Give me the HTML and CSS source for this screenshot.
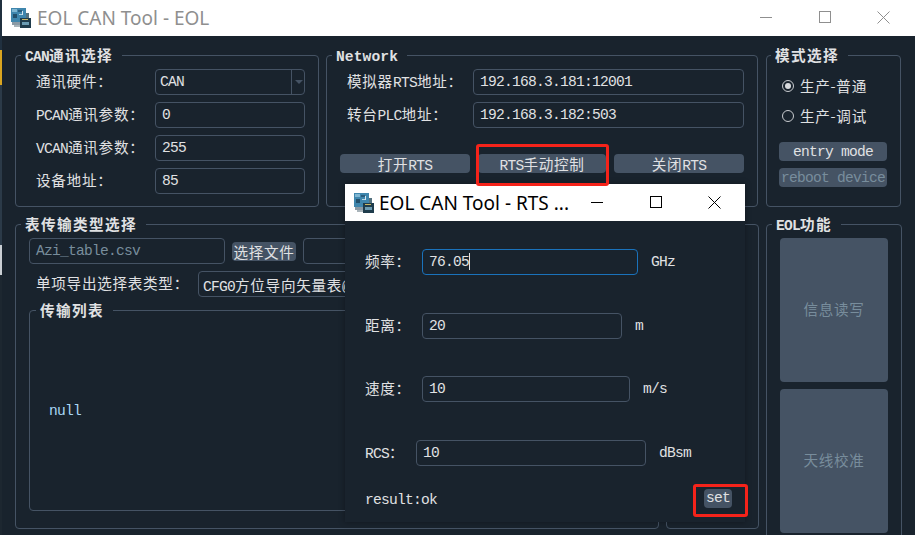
FILE: index.html
```html
<!DOCTYPE html>
<html lang="zh">
<head>
<meta charset="utf-8">
<title>EOL CAN Tool - EOL</title>
<link rel="stylesheet" href="styles.css">
</head>
<body>
<svg class="defs" width="0" height="0">
  <symbol id="app-icon" viewBox="0 0 20 20">
    <rect x="0" y="0" width="15" height="14" fill="#3f86ad"/>
    <rect x="1" y="1" width="5" height="3" fill="#7fb6d2"/>
    <rect x="7" y="2" width="4" height="2" fill="#2a5d7d"/>
    <rect x="2" y="6" width="4" height="4" fill="#23506c"/>
    <rect x="8" y="6" width="3" height="1" fill="#b5d5e5"/>
    <rect x="11" y="3" width="1" height="4" fill="#d5e5ee"/>
    <rect x="1" y="14" width="8" height="3" fill="#8a9aa5"/>
    <rect x="3" y="17" width="9" height="2" fill="#a9b4ba"/>
    <rect x="9" y="10" width="11" height="10" fill="#1f3c4c"/>
    <rect x="11" y="11" width="6" height="1" fill="#c9b765"/>
    <rect x="11" y="14" width="7" height="3" fill="#6b9cb3"/>
    <rect x="15" y="5" width="3" height="5" fill="#55727f"/>
  </symbol>
</svg>

<div class="window">
  <header class="titlebar">
    <svg class="app-icon"><use href="#app-icon"/></svg>
    <span class="title-text inactive">EOL CAN Tool - EOL</span>
    <div class="controls">
      <svg class="ctl" viewBox="0 0 14 14"><path d="M1 6.5H13" stroke="#8f8f8f" fill="none"/></svg>
      <svg class="ctl" viewBox="0 0 14 14"><rect x="1.5" y="0.5" width="11" height="11" stroke="#8f8f8f" fill="none"/></svg>
      <svg class="ctl" viewBox="0 0 14 14"><path d="M0.5 0.5L12.5 12.5M12.5 0.5L0.5 12.5" stroke="#8f8f8f" fill="none"/></svg>
    </div>
  </header>

  <main class="content">
    <div class="top-row">
      <fieldset class="group can-group">
        <legend>CAN<span class="zh">通讯选择</span></legend>
        <div class="form-rows">
          <div class="row">
            <label class="lbl"><span class="zh">通讯硬件：</span></label>
            <div class="field combo"><span>CAN</span><i class="arrow"></i></div>
          </div>
          <div class="row">
            <label class="lbl">PCAN<span class="zh">通讯参数：</span></label>
            <div class="field">0</div>
          </div>
          <div class="row">
            <label class="lbl">VCAN<span class="zh">通讯参数：</span></label>
            <div class="field">255</div>
          </div>
          <div class="row">
            <label class="lbl"><span class="zh">设备地址：</span></label>
            <div class="field">85</div>
          </div>
        </div>
      </fieldset>

      <fieldset class="group net-group">
        <legend class="latin-title">Network</legend>
        <div class="form-rows">
          <div class="row">
            <label class="lbl"><span class="zh">模拟器</span>RTS<span class="zh">地址：</span></label>
            <div class="field">192.168.3.181:12001</div>
          </div>
          <div class="row">
            <label class="lbl"><span class="zh">转台</span>PLC<span class="zh">地址：</span></label>
            <div class="field">192.168.3.182:503</div>
          </div>
        </div>
        <div class="net-buttons">
          <button class="btn"><span class="zh">打开</span>RTS</button>
          <button class="btn mid">RTS<span class="zh">手动控制</span></button>
          <button class="btn"><span class="zh">关闭</span>RTS</button>
        </div>
      </fieldset>

      <fieldset class="group mode-group">
        <legend><span class="zh">模式选择</span></legend>
        <div class="radio"><i class="dot checked"></i><span class="zh">生产-普通</span></div>
        <div class="radio"><i class="dot"></i><span class="zh">生产-调试</span></div>
        <button class="btn mode-btn first">entry mode</button>
        <button class="btn mode-btn dim">reboot device</button>
      </fieldset>
    </div>

    <div class="bottom-row">
      <fieldset class="group table-group">
        <legend><span class="zh">表传输类型选择</span></legend>
        <div class="file-row">
          <div class="field file-path">Azi_table.csv</div>
          <button class="btn file-btn"><span class="zh">选择文件</span></button>
          <div class="field file-extra"></div>
        </div>
        <div class="export-row">
          <label class="lbl"><span class="zh">单项导出选择表类型：</span></label>
          <div class="field export-combo">CFG0<span class="zh">方位导向矢量表</span>@<span class="zh">导出</span></div>
        </div>
        <fieldset class="group list-group">
          <legend><span class="zh">传输列表</span></legend>
          <div class="null-text">null</div>
        </fieldset>
      </fieldset>

      <fieldset class="group side-group"><legend></legend></fieldset>

      <fieldset class="group eol-group">
        <legend>EOL<span class="zh">功能</span></legend>
        <button class="btn big">
          <span class="zh">信息读写</span>
        </button>
        <button class="btn big">
          <span class="zh">天线校准</span>
        </button>
      </fieldset>
    </div>
  </main>
</div>

<div class="mark mark-rts"></div>

<section class="dialog">
  <header class="dlg-title">
    <svg class="app-icon"><use href="#app-icon"/></svg>
    <span class="title-text">EOL CAN Tool - RTS ...</span>
    <div class="controls">
      <svg class="ctl" viewBox="0 0 14 14"><path d="M1 6.5H13" stroke="#000" fill="none"/></svg>
      <svg class="ctl" viewBox="0 0 14 14"><rect x="1.5" y="0.5" width="11" height="11" stroke="#000" fill="none"/></svg>
      <svg class="ctl" viewBox="0 0 14 14"><path d="M0.5 0.5L12.5 12.5M12.5 0.5L0.5 12.5" stroke="#000" fill="none"/></svg>
    </div>
  </header>
  <div class="dlg-body">
    <div class="dlg-row">
      <label class="dlg-lbl"><span class="zh">频率：</span></label>
      <div class="field focus w216">76.05<i class="caret"></i></div>
      <span class="unit">GHz</span>
    </div>
    <div class="dlg-row">
      <label class="dlg-lbl"><span class="zh">距离：</span></label>
      <div class="field w200">20</div>
      <span class="unit">m</span>
    </div>
    <div class="dlg-row">
      <label class="dlg-lbl"><span class="zh">速度：</span></label>
      <div class="field w208">10</div>
      <span class="unit">m/s</span>
    </div>
    <div class="dlg-row">
      <label class="dlg-lbl short">RCS<span class="zh">：</span></label>
      <div class="field w230">10</div>
      <span class="unit">dBsm</span>
    </div>
    <div class="result-row">
      <span class="result-text">result:ok</span>
      <button class="btn set-btn">set</button>
    </div>
  </div>
  <div class="mark mark-set"></div>
</section>
</body>
</html>
```

FILE: styles.css
```css
* { box-sizing: border-box; }

html, body {
  margin: 0;
  height: 100%;
  overflow: hidden;
}

body {
  position: relative;
  background: linear-gradient(180deg, #20303f 0, #20303f 50px, #d9a520 50px, #d9a520 85px, #2b3a48 85px, #2b3a48 245px, #c9ced3 245px, #c9ced3 275px, #1d2730 275px);
  font-family: "Liberation Mono", "Noto Sans CJK SC", monospace;
  font-size: 14.6px;
  letter-spacing: -0.76px;
  line-height: 20px;
  color: #e0e1e3;
}

.defs { position: absolute; }

.zh {
  font-family: "Noto Sans CJK SC", sans-serif;
  font-size: 14.6px;
  letter-spacing: 0.7px;
}

.window {
  margin-left: 2px;
  width: 913px;
  height: 535px;
  background: #19232d;
  overflow: hidden;
}

.titlebar {
  height: 36px;
  background: #fff;
  display: flex;
  align-items: center;
  padding-left: 9px;
}

.app-icon {
  width: 20px;
  height: 20px;
  flex: none;
}

.title-text {
  font-family: "Noto Sans", sans-serif;
  font-size: 19px;
  letter-spacing: 0;
  line-height: 36px;
  color: #000;
  margin-left: 6px;
  white-space: nowrap;
}

.title-text.inactive { color: #8f8f8f; }

.controls {
  margin-left: auto;
  display: flex;
  gap: 45px;
  padding-right: 24px;
}

.ctl {
  width: 14px;
  height: 14px;
  flex: none;
}

.content {
  padding: 9px 0 0 13px;
}

.top-row {
  display: flex;
  height: 162px;
}

.bottom-row {
  display: flex;
  margin-top: 7px;
  height: 340px;
}

.group {
  margin: 0;
  min-width: 0;
  border: 1px solid #455364;
  border-radius: 4px;
  padding: 4px 0 0 20px;
}

.group > legend {
  margin-left: -15px;
  padding: 0 9px 0 4px;
  line-height: 20px;
  height: 20px;
  font-weight: 700;
}

.group > legend .zh {
  font-weight: 700;
  letter-spacing: 1.4px;
}

.group > .latin-title {
  letter-spacing: 0.1px;
  line-height: 24px;
}

.can-group { width: 304px; margin-right: 7px; }
.net-group { width: 432px; margin-right: 8px; }
.mode-group { width: 135px; padding-left: 12px; padding-right: 13px; }
.mode-group > legend { margin-left: -8px; }

.form-rows {
  display: flex;
  flex-direction: column;
  gap: 7px;
}

.row {
  display: flex;
  align-items: center;
  height: 26px;
}

.lbl {
  flex: none;
  white-space: nowrap;
}

.can-group .lbl { width: 119px; }
.net-group .lbl { width: 126px; }

.field {
  height: 26px;
  border: 1px solid #455364;
  border-radius: 4px;
  padding: 0 6px;
  line-height: 25px;
  white-space: nowrap;
  overflow: hidden;
  flex: none;
  background: #19232d;
}

.can-group .field { width: 150px; }
.net-group .field { width: 271px; }

.combo {
  display: flex;
  justify-content: space-between;
  padding: 0 0 0 4px;
}

.arrow {
  width: 13px;
  height: 24px;
  border-left: 1px solid #455364;
  position: relative;
}

.arrow::after {
  content: "";
  position: absolute;
  left: 3px;
  top: 10px;
  border: 4px solid transparent;
  border-top: 4px solid #455364;
  border-bottom: 0;
}

.btn {
  display: block;
  margin: 0;
  padding: 0;
  border: 0;
  border-radius: 4px;
  background: #455364;
  color: #e0e1e3;
  font-family: inherit;
  font-size: 14.6px;
  letter-spacing: -0.76px;
  line-height: 19px;
  text-align: center;
  white-space: nowrap;
}

.net-buttons {
  display: flex;
  margin-top: 26px;
  margin-left: -7px;
  gap: 8px;
}

.net-buttons .btn {
  width: 130px;
  height: 19px;
}

.net-buttons .btn.mid { width: 128px; }

.radio {
  display: flex;
  align-items: center;
  height: 30px;
  margin-left: 3px;
  gap: 6px;
  white-space: nowrap;
}

.radio:first-of-type { margin-top: 2px; }

.dot {
  width: 12px;
  height: 12px;
  flex: none;
  border: 1px solid #c9ccd0;
  border-radius: 50%;
  position: relative;
}

.dot.checked::after {
  content: "";
  position: absolute;
  inset: 2px;
  border-radius: 50%;
  background: #d8dadd;
}

.mode-btn {
  width: 108px;
  height: 19px;
  padding-top: 1px;
}

.mode-btn.first { margin-top: 11px; margin-bottom: 7px; }
.mode-btn.dim { color: #788d9c; }

.table-group {
  width: 644px;
  height: 315px;
  margin-right: 7px;
  padding-left: 13px;
  padding-right: 10px;
}

.table-group > legend { margin-left: -8px; }

.file-row {
  display: flex;
  align-items: center;
  height: 26px;
}

.file-path {
  width: 196px;
  color: #788d9c;
}

.file-btn {
  width: 64px;
  height: 19px;
  margin: 0 7px;
  flex: none;
}

.file-extra { width: 340px; }

.export-row {
  display: flex;
  align-items: center;
  margin-top: 7px;
  height: 26px;
}

.export-row .lbl {
  width: 169px;
  padding-left: 7px;
}

.export-combo {
  width: 451px;
  padding: 0 4px;
}

.list-group {
  display: block;
  margin-top: 3px;
  height: 211px;
  padding: 0 0 0 19px;
}

.table-group .list-group > legend { margin-left: -13px; }

.null-text {
  display: flex;
  align-items: center;
  color: #a9d6f5;
  height: 182px;
}

.side-group {
  width: 93px;
  height: 315px;
  margin-right: 7px;
  padding: 0;
}

.group.side-group > legend {
  margin: 0;
  padding: 0;
}

.eol-group {
  width: 136px;
  height: 340px;
  padding-left: 13px;
}

.eol-group > legend { margin-left: -8px; }

.big {
  width: 108px;
  height: 144px;
  margin-bottom: 7px;
  color: #788d9c;
}

.dialog {
  position: absolute;
  left: 345px;
  top: 184px;
  width: 400px;
  height: 338px;
  background: #19232d;
  box-shadow: 0 0 6px rgba(0, 0, 0, 0.35);
}

.dlg-title {
  height: 37px;
  background: #fff;
  display: flex;
  align-items: center;
  padding-left: 9px;
}

.dlg-title .title-text { margin-left: 5px; }
.dlg-title .controls { padding-right: 23px; }

.dlg-body {
  display: flex;
  flex-direction: column;
  gap: 37.5px;
  padding: 28px 13px 0 20px;
}

.dlg-row {
  display: flex;
  align-items: center;
  height: 26px;
  white-space: nowrap;
}

.dlg-lbl { width: 57px; flex: none; }
.dlg-lbl.short { width: 51px; }

.unit { margin-left: 13px; }

.w216 { width: 216px; }
.w200 { width: 200px; }
.w208 { width: 208px; }
.w230 { width: 230px; }

.focus { border-color: #1a72bb; }

.caret {
  display: inline-block;
  width: 1px;
  height: 17px;
  background: #e0e1e3;
  vertical-align: -4px;
}

.result-row {
  display: flex;
  align-items: center;
  justify-content: space-between;
  margin-top: -17px;
}

.result-text { margin-top: 4px; }

.set-btn {
  width: 28px;
  height: 19px;
}

.mark {
  position: absolute;
  border: 3px solid #f5231a;
  border-radius: 3px;
}

.mark-rts {
  left: 476px;
  top: 144px;
  width: 133px;
  height: 42px;
  z-index: 2;
}

.mark-set {
  left: 348px;
  top: 300px;
  width: 55px;
  height: 33px;
}
```
